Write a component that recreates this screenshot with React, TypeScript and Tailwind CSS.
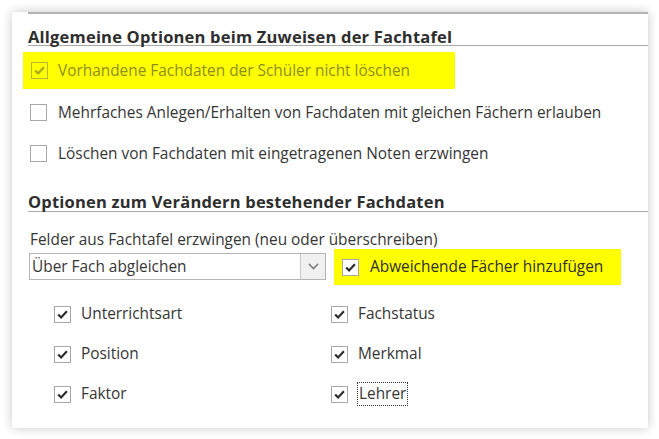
import React from "react";

const Check = ({ disabled = false }: { disabled?: boolean }) => (
  <div
    className={
      disabled
        ? "w-[17px] h-[17px] shrink-0 border border-[#b8b830] flex items-center justify-center"
        : "w-[17px] h-[17px] shrink-0 border border-[#a8a8a8] bg-white flex items-center justify-center"
    }
  >
    <svg width="13" height="13" viewBox="0 0 13 13">
      <path
        d="M2.2 6.4 L5.1 9.5 L10.9 3.2"
        fill="none"
        stroke={disabled ? "#a6a620" : "#2b2b2b"}
        strokeWidth="2.2"
      />
    </svg>
  </div>
);

const Empty = () => (
  <div className="w-[17px] h-[17px] shrink-0 border border-[#a8a8a8] bg-white" />
);

const fields = [
  ["Unterrichtsart", "Fachstatus"],
  ["Position", "Merkmal"],
  ["Faktor", "Lehrer"],
];

export default function App() {
  return (
    <div
      className="w-[659px] h-[439px] bg-white p-[12px] text-[15.4px] text-[#363636]"
      style={{ fontFamily: "'Open Sans', 'DejaVu Sans', sans-serif" }}
    >
      <div className="w-[636px] h-[416px] bg-white shadow-[0_0_10px_rgba(0,0,0,0.22)]">
        <div className="ml-[16px] h-[2px] bg-[#b4b4b4]" />
        <div className="ml-[16px] h-[32px] pt-[14px] border-b border-[#a8a8a8] font-bold text-[16.5px] leading-[18px] text-[#2e2e2e] tracking-[0.2px]">
          Allgemeine Optionen beim Zuweisen der Fachtafel
        </div>

        <div className="mt-[6px] ml-[11px] w-[432px] h-[37px] bg-[#ffff00] flex items-center pl-[8px] gap-[10px]">
          <Check disabled />
          <span className="text-[#8d8d1e]">Vorhandene Fachdaten der Schüler nicht löschen</span>
        </div>

        <div className="mt-[3px] ml-[18px] h-[41px] flex items-center gap-[11px]">
          <Empty />
          <span>Mehrfaches Anlegen/Erhalten von Fachdaten mit gleichen Fächern erlauben</span>
        </div>
        <div className="ml-[18px] h-[41px] flex items-center gap-[11px]">
          <Empty />
          <span>Löschen von Fachdaten mit eingetragenen Noten erzwingen</span>
        </div>

        <div className="ml-[16px] h-[38px] pt-[19px] border-b border-[#a8a8a8] font-bold text-[16.5px] leading-[18px] text-[#2e2e2e] tracking-[0.2px]">
          Optionen zum Verändern bestehender Fachdaten
        </div>

        <div className="mt-[19px] ml-[18px] leading-[18px]">
          Felder aus Fachtafel erzwingen (neu oder überschreiben)
        </div>

        <div className="ml-[17px] h-[36px] flex items-start">
          <div className="mt-[4px] w-[297px] h-[27px] border border-[#b4b4b4] bg-white flex">
            <div className="flex-1 pl-[2px] flex items-center">Über Fach abgleichen</div>
            <div className="w-[25px] h-full border-l border-[#c8c8c8] bg-[#f0f0f0] flex items-center justify-center">
              <svg width="11" height="7" viewBox="0 0 11 7">
                <path d="M1 1 L5.5 5.5 L10 1" fill="none" stroke="#7a7a7a" strokeWidth="1.6" />
              </svg>
            </div>
          </div>
          <div className="ml-[8px] w-[287px] h-[36px] bg-[#ffff00] flex items-center pl-[8px] gap-[11px]">
            <Check />
            <span className="text-[#2e2e2e]">Abweichende Fächer hinzufügen</span>
          </div>
        </div>

        <div className="mt-[9px] ml-[42px] grid grid-cols-[277px_1fr]">
          {fields.map(([a, b]) => (
            <React.Fragment key={a}>
              <div className="h-[40px] flex items-center gap-[10px]">
                <Check />
                <span>{a}</span>
              </div>
              <div className="h-[40px] flex items-center gap-[9px]">
                <Check />
                {b === "Lehrer" ? (
                  <span className="border border-dotted border-[#333] px-[1px] leading-[22px]">{b}</span>
                ) : (
                  <span className="pl-[1px]">{b}</span>
                )}
              </div>
            </React.Fragment>
          ))}
        </div>
      </div>
    </div>
  );
}
